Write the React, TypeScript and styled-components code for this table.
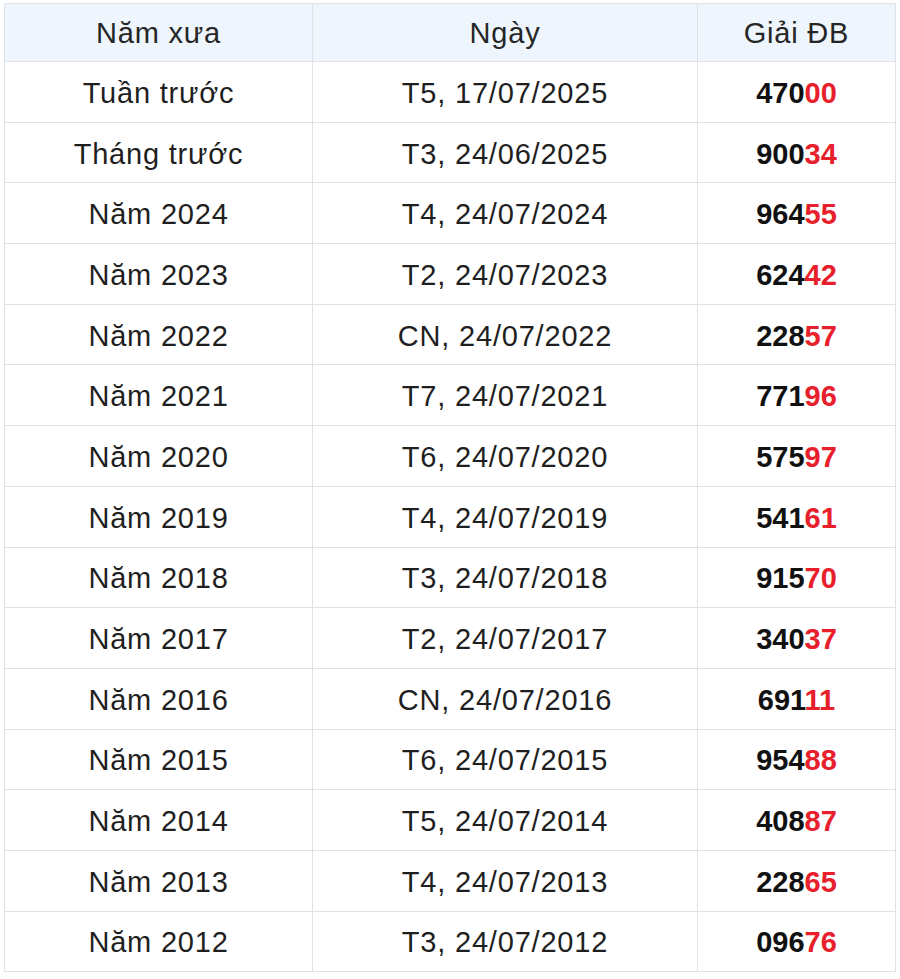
import React from 'react'
import styled, { createGlobalStyle } from 'styled-components'

const GlobalStyle = createGlobalStyle`
  body {
    margin: 0;
    background: #ffffff;
    font-family: 'Liberation Sans', Arial, sans-serif;
  }
`

const Wrapper = styled.div`
  padding: 3px 4px 0 4px;
`

const Table = styled.table`
  width: 891px;
  border-collapse: collapse;
  table-layout: fixed;
  font-size: 29px;
  color: #222222;
`

const HeadCell = styled.th`
  height: 58px;
  box-sizing: border-box;
  padding: 2px 0 0 0;
  background: #eef5fd;
  border: 1px solid #dfe3e8;
  font-weight: normal;
  letter-spacing: 0.8px;
  text-align: center;
  color: #262626;
`

const Cell = styled.td`
  height: 60.7px;
  box-sizing: border-box;
  padding: 3px 0 0 0;
  border: 1px solid #dfe3e8;
  letter-spacing: 0.8px;
  text-align: center;
  color: #1f1f1f;
`

const Prize = styled.span`
  font-weight: bold;
  letter-spacing: 0;
  color: #111111;
`

const Tail = styled.span`
  color: #e8202c;
`

interface Row {
  label: string
  date: string
  prize: string
}

const rows: Row[] = [
  { label: 'Tuần trước', date: 'T5, 17/07/2025', prize: '47000' },
  { label: 'Tháng trước', date: 'T3, 24/06/2025', prize: '90034' },
  { label: 'Năm 2024', date: 'T4, 24/07/2024', prize: '96455' },
  { label: 'Năm 2023', date: 'T2, 24/07/2023', prize: '62442' },
  { label: 'Năm 2022', date: 'CN, 24/07/2022', prize: '22857' },
  { label: 'Năm 2021', date: 'T7, 24/07/2021', prize: '77196' },
  { label: 'Năm 2020', date: 'T6, 24/07/2020', prize: '57597' },
  { label: 'Năm 2019', date: 'T4, 24/07/2019', prize: '54161' },
  { label: 'Năm 2018', date: 'T3, 24/07/2018', prize: '91570' },
  { label: 'Năm 2017', date: 'T2, 24/07/2017', prize: '34037' },
  { label: 'Năm 2016', date: 'CN, 24/07/2016', prize: '69111' },
  { label: 'Năm 2015', date: 'T6, 24/07/2015', prize: '95488' },
  { label: 'Năm 2014', date: 'T5, 24/07/2014', prize: '40887' },
  { label: 'Năm 2013', date: 'T4, 24/07/2013', prize: '22865' },
  { label: 'Năm 2012', date: 'T3, 24/07/2012', prize: '09676' },
]

const App: React.FC = () => {
  return (
    <Wrapper>
      <GlobalStyle />
      <Table>
        <colgroup>
          <col style={{ width: 308 }} />
          <col style={{ width: 385 }} />
          <col style={{ width: 198 }} />
        </colgroup>
        <thead>
          <tr>
            <HeadCell>Năm xưa</HeadCell>
            <HeadCell>Ngày</HeadCell>
            <HeadCell>Giải ĐB</HeadCell>
          </tr>
        </thead>
        <tbody>
          {rows.map(r =>
            <tr key={r.label}>
              <Cell>{r.label}</Cell>
              <Cell>{r.date}</Cell>
              <Cell>
                <Prize>{r.prize.slice(0, 3)}<Tail>{r.prize.slice(3)}</Tail></Prize>
              </Cell>
            </tr>
          )}
        </tbody>
      </Table>
    </Wrapper>
  )
}

export default App
